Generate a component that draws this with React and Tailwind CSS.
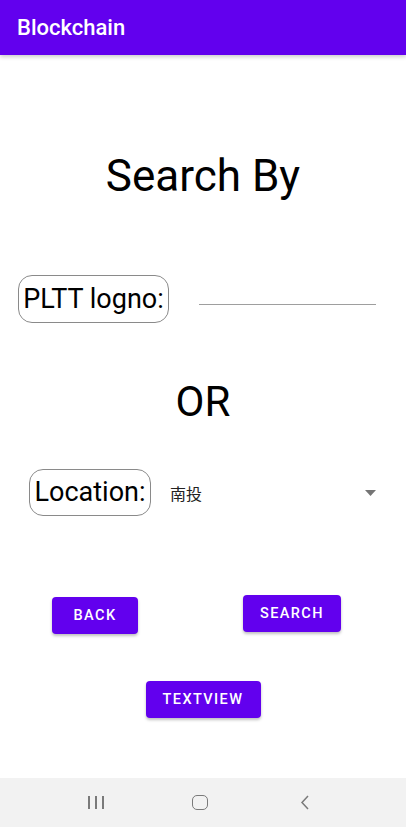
export default function App() {
  return (
    <div className="w-[406px] h-[827px] flex flex-col bg-white font-['Roboto',sans-serif] text-black overflow-hidden">
      {/* App bar */}
      <div className="h-[55px] shrink-0 bg-[#6200EE] flex items-center px-[17px] shadow-[0_2px_4px_rgba(0,0,0,0.2)] z-10">
        <span className="text-white text-[22px] font-medium">Blockchain</span>
      </div>

      <div className="flex-1 flex flex-col">
        <h1 className="mt-[99px] text-center text-[44px] leading-none">Search By</h1>

        {/* PLTT row */}
        <div className="mt-[77px] h-[48px] flex items-start">
          <div className="ml-[18px] w-[151px] h-[48px] border border-[#8a8a8a] rounded-[14px] flex items-center justify-center text-[27px] leading-none">
            PLTT logno:
          </div>
          <div className="ml-[30px] mt-[29px] w-[177px] h-px bg-[#9e9e9e]" />
        </div>

        <div className="mt-[58px] text-center text-[42px] leading-none">OR</div>

        {/* Location row */}
        <div className="mt-[46px] h-[47px] flex items-center">
          <div className="ml-[29px] w-[122px] h-[47px] border border-[#8a8a8a] rounded-[14px] flex items-center justify-center text-[27px] leading-none">
            Location:
          </div>
          <div className="ml-[19px] flex-1 flex items-center justify-between pr-[30px]">
            <span className="text-[16px] font-['Noto_Sans_CJK_TC',sans-serif] text-[#222]">南投</span>
            <svg width="11" height="6" viewBox="0 0 11 6">
              <path d="M0 0 L11 0 L5.5 6 Z" fill="#757575" />
            </svg>
          </div>
        </div>

        {/* Buttons */}
        <div className="mt-[79px] flex items-start">
          <button className="ml-[52px] mt-[2px] w-[86px] h-[37px] rounded-[4px] bg-[#6200EE] text-white text-[14.5px] font-medium tracking-[1.4px] shadow-[0_2px_3px_rgba(0,0,0,0.25)]">
            BACK
          </button>
          <button className="ml-[105px] w-[98px] h-[37px] rounded-[4px] bg-[#6200EE] text-white text-[14.5px] font-medium tracking-[1.4px] shadow-[0_2px_3px_rgba(0,0,0,0.25)]">
            SEARCH
          </button>
        </div>

        <button className="mt-[47px] self-center w-[115px] h-[37px] rounded-[4px] bg-[#6200EE] text-white text-[14.5px] font-medium tracking-[1.4px] shadow-[0_2px_3px_rgba(0,0,0,0.25)]">
          TEXTVIEW
        </button>

        {/* Nav bar */}
        <div className="mt-auto h-[49px] bg-[#f2f2f2] flex items-center">
          <div className="ml-[88px] flex gap-[5px] h-[13px]">
            <div className="w-[2px] h-full bg-[#7a7a7a]" />
            <div className="w-[2px] h-full bg-[#7a7a7a]" />
            <div className="w-[2px] h-full bg-[#7a7a7a]" />
          </div>
          <div className="ml-[88px] w-[16px] h-[15px] border-[1.5px] border-[#7a7a7a] rounded-[5px]" />
          <svg className="ml-[92px]" width="10" height="15" viewBox="0 0 10 15">
            <path d="M8 1 L2 7.5 L8 14" fill="none" stroke="#7a7a7a" strokeWidth="1.5" />
          </svg>
        </div>
      </div>
    </div>
  );
}
